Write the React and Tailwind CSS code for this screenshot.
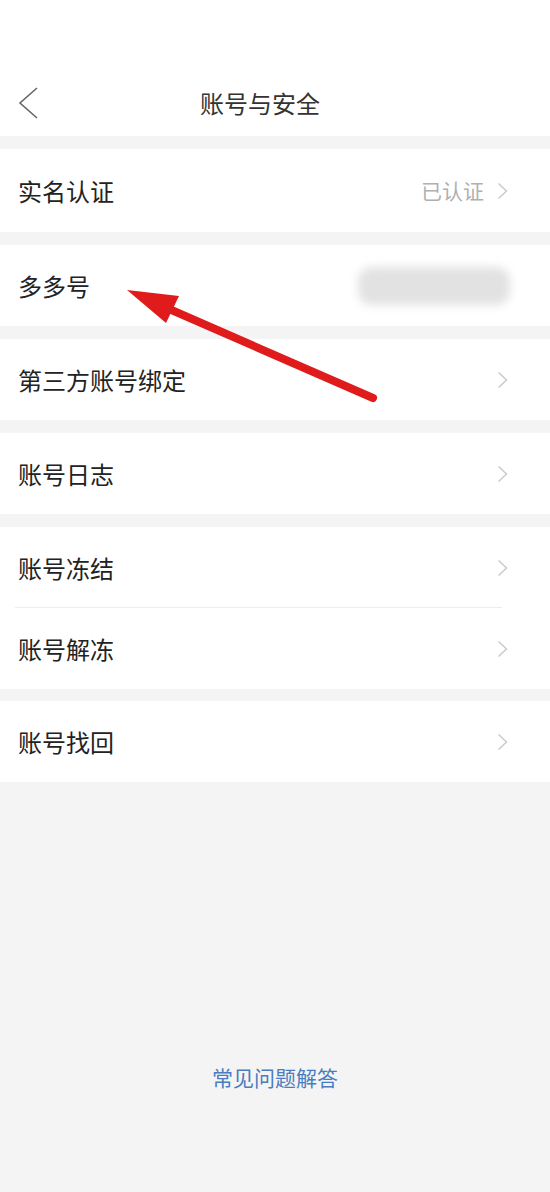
// small grey arrow at the end of a row
function Chevron() {
	return (
		<svg className="absolute right-[42px]" width="11" height="18" viewBox="0 0 11 18">
			<polyline points="1.5,1.5 9.5,9 1.5,16.5" fill="none" stroke="#cacaca" strokeWidth="1.5" />
		</svg>
	)
}

// one settings row
function Row({ label, right, chevron = true, divider = false, height = "h-[81px]" }) {
	return (
		<div className={`relative flex items-center ${height} bg-white pl-[18px]`}>
			<span className="text-[24px] text-[#222]">{label}</span>
			<div className="ml-auto flex items-center">
				{right}
			</div>
			{chevron && <Chevron />}
			{divider && <div className="absolute left-[15px] right-[48px] bottom-0 h-px bg-[#eeeeee]" />}
		</div>
	)
}

export default function App() {
	return (
		<div className="relative flex flex-col min-h-[1192px] bg-[#f4f4f4]" style={{ fontFamily: '"Noto Sans CJK SC", "Noto Sans", sans-serif' }}>

			{/* top bar */}
			<div className="bg-white h-[136px] pt-[70px]">
				<div className="relative flex items-center justify-center h-[66px] pr-[30px]">
					<svg className="absolute left-[17px]" width="22" height="34" viewBox="0 0 22 34">
						<polyline points="20,2 3,17 20,32" fill="none" stroke="#666" strokeWidth="1.6" />
					</svg>
					<h1 className="text-[24px] text-[#333]">账号与安全</h1>
				</div>
			</div>

			<div className="mt-[13px]">
				<Row label="实名认证" height="h-[83px]" right={
					<span className="mr-[66px] text-[21px] text-[#b0b0b0]">已认证</span>
				} />
			</div>

			<div className="mt-[13px]">
				<Row label="多多号" chevron={false} right={
					<div className="w-[152px] h-[38px] mr-[40px] rounded-[14px] bg-[#e2e2e2] blur-[5px]" />
				} />
			</div>

			<div className="mt-[13px]">
				<Row label="第三方账号绑定" />
			</div>

			<div className="mt-[13px]">
				<Row label="账号日志" />
			</div>

			<div className="mt-[13px]">
				<Row label="账号冻结" divider />
				<Row label="账号解冻" />
			</div>

			<div className="mt-[12px]">
				<Row label="账号找回" />
			</div>

			{/* faq link */}
			<div className="flex justify-center mt-[280px]">
				<span className="text-[21px] text-[#4a7dc0]">常见问题解答</span>
			</div>

			{/* red arrow overlay */}
			<svg className="absolute left-0 top-0 pointer-events-none" width="550" height="1192">
				<line x1="373" y1="398" x2="160" y2="305" stroke="#e01b1b" strokeWidth="8" strokeLinecap="round" />
				<polygon points="127,290 179,296 166,323" fill="#e01b1b" />
			</svg>
		</div>
	)
}
